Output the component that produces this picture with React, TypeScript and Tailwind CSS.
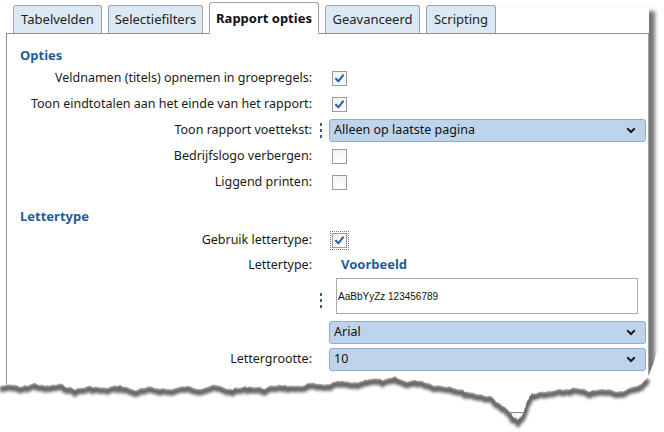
import React from "react";

const font = { fontFamily: '"Segoe UI", "Noto Sans", sans-serif' };

function Check({ checked, focus }: { checked?: boolean; focus?: boolean }) {
  return (
    <div className={focus ? "ml-[3px] outline outline-1 outline-dotted outline-[#777] outline-offset-[1px]" : "ml-[3px]"}>
      <div className="w-[15px] h-[15px] border border-[#9a9b9c] bg-gradient-to-b from-[#f2f2f2] to-[#ffffff] flex items-center justify-center">
        {checked && (
          <svg width="11" height="11" viewBox="0 0 11 11">
            <path d="M2 5.8 L4.4 8.3 L9 2.4" fill="none" stroke="#2a62ab" strokeWidth="2.1" strokeLinecap="round" strokeLinejoin="round" />
          </svg>
        )}
      </div>
    </div>
  );
}

function Dots() {
  return (
    <div className="flex flex-col gap-[3px] items-center">
      <div className="w-[2px] h-[3px] bg-[#3d5f86]" />
      <div className="w-[2px] h-[3px] bg-[#3d5f86]" />
      <div className="w-[2px] h-[3px] bg-[#3d5f86]" />
    </div>
  );
}

function Select({ value }: { value: string }) {
  return (
    <div className="w-[317px] h-[23px] rounded-[3px] border border-[#93abc6] bg-[#bed4ec] flex items-center justify-between pl-[4px] pr-[9px] text-[12.5px] text-[#111]">
      <span>{value}</span>
      <svg width="10" height="7" viewBox="0 0 10 7">
        <path d="M1.2 1.3 L5 5 L8.8 1.3" fill="none" stroke="#1b1b1b" strokeWidth="2" />
      </svg>
    </div>
  );
}

function Row({ label, dots, children, h = "h-[26px]" }: { label?: string; dots?: boolean; children?: React.ReactNode; h?: string }) {
  return (
    <div className={`flex items-center ${h}`}>
      <div className="w-[305px] text-right text-[12.5px] text-[#1a1a1a]">{label}</div>
      <div className="w-[17px] flex justify-center">{dots && <Dots />}</div>
      <div className="flex items-center">{children}</div>
    </div>
  );
}

function Tab({ label, w, active }: { label: string; w: string; active?: boolean }) {
  return active ? (
    <div className={`${w} h-[32px] -mb-px mt-[2px] bg-white border border-b-0 border-[#9aa3ad] rounded-t-[3px] flex items-center justify-center font-bold text-[13px] text-[#111] relative z-10`}>
      {label}
    </div>
  ) : (
    <div className={`${w} h-[28px] mt-[5px] bg-[#dde8f5] border border-b-0 border-[#9aa3ad] rounded-t-[3px] flex items-center justify-center text-[13px] text-[#222]`}>
      {label}
    </div>
  );
}

const base: [number, number][] = [
  [0, 386], [10, 384], [20, 387], [35, 383], [45, 386], [60, 384], [75, 389], [90, 386], [105, 388], [120, 385], [135, 390],
  [150, 387], [170, 389], [185, 386], [200, 388], [215, 385], [230, 389], [250, 386], [265, 388], [280, 384], [295, 387],
  [310, 383], [325, 385], [340, 381], [355, 383], [370, 378], [385, 380], [395, 377], [405, 381], [420, 380], [435, 385],
  [450, 386], [465, 391], [480, 394], [492, 397], [500, 404], [508, 410], [513, 416], [518, 420], [523, 414], [527, 401],
  [532, 393], [545, 392], [558, 390], [575, 388], [590, 391], [605, 389], [620, 391], [635, 387], [645, 381], [650, 372], [654, 362], [657, 352],
];

function jagged(): [number, number][] {
  const out: [number, number][] = [];
  let seed = 7;
  const rnd = () => {
    seed = (seed * 9301 + 49297) % 233280;
    return seed / 233280;
  };
  for (let i = 0; i < base.length - 1; i++) {
    const [x0, y0] = base[i];
    const [x1, y1] = base[i + 1];
    const steps = Math.max(1, Math.round(Math.hypot(x1 - x0, y1 - y0) / 2.5));
    for (let s = 0; s < steps; s++) {
      const t = s / steps;
      const j = i > 0 && i < base.length - 3 ? (rnd() - 0.5) * 2.4 : 0;
      out.push([x0 + (x1 - x0) * t, y0 + (y1 - y0) * t + j]);
    }
  }
  out.push(base[base.length - 1]);
  return out;
}

export default function App() {
  const edge = jagged();
  const line = edge.map(([x, y], i) => `${i ? "L" : "M"}${x.toFixed(1)} ${y.toFixed(1)}`).join(" ");
  const shadowLine = edge
    .filter(([x]) => x < 648)
    .map(([x, y], i) => `${i ? "L" : "M"}${x.toFixed(1)} ${(y + 3.5).toFixed(1)}`)
    .join(" ");
  const fill = `${line} L664 352 L664 432 L0 432 Z`;

  return (
    <div className="w-[664px] h-[432px] bg-white relative overflow-hidden" style={font}>
      <div className="absolute left-0 top-[8px] w-[649px] h-[400px] shadow-[6px_3px_4px_rgba(0,0,0,0.55)] bg-white" />
      <div className="relative w-[649px]">
        <div className="flex gap-[6px] pl-[13px] h-[34px] items-start">
          <Tab label="Tabelvelden" w="w-[89px]" />
          <Tab label="Selectiefilters" w="w-[95px]" />
          <Tab label="Rapport opties" w="w-[110px]" active />
          <Tab label="Geavanceerd" w="w-[95px]" />
          <Tab label="Scripting" w="w-[70px]" />
        </div>
        <div className="ml-[6px] border border-[#8c9096] border-r-[#a0a4a8] bg-white h-[380px] -mt-px">
          <div className="pt-[12px]">
            <div className="h-[19px] pl-[13px] flex items-center text-[13px] font-bold text-[#1f5c99]">Opties</div>
            <Row label="Veldnamen (titels) opnemen in groepregels:"><Check checked /></Row>
            <Row label="Toon eindtotalen aan het einde van het rapport:"><Check checked /></Row>
            <Row label="Toon rapport voettekst:" dots><Select value="Alleen op laatste pagina" /></Row>
            <Row label="Bedrijfslogo verbergen:"><Check /></Row>
            <Row label="Liggend printen:"><Check /></Row>
            <div className="h-[20px] mt-[12px] pl-[13px] flex items-center text-[13px] font-bold text-[#1f5c99]">Lettertype</div>
            <Row label="Gebruik lettertype:"><Check checked focus /></Row>
            <Row label="Lettertype:" h="h-[24px]">
              <span className="ml-[12px] text-[13px] font-bold text-[#1f5c99]">Voorbeeld</span>
            </Row>
            <div className="flex h-[36px] mt-[1px]">
              <div className="w-[305px]" />
              <div className="w-[17px] flex justify-center pt-[15px]"><Dots /></div>
              <div className="ml-[7px] w-[302px] h-[36px] border border-[#a9a9a9] bg-white flex items-center pl-[1px] text-[10px] text-[#111]" style={{ fontFamily: '"Liberation Sans", Arial, sans-serif' }}>
                AaBbYyZz 123456789
              </div>
            </div>
            <div className="mt-[5px]"><Row><Select value="Arial" /></Row></div>
            <div className="mt-[1px]"><Row label="Lettergrootte:"><Select value="10" /></Row></div>
          </div>
        </div>
      </div>
      <svg className="absolute inset-0 pointer-events-none" width="664" height="432" viewBox="0 0 664 432">
        <defs>
          <clipPath id="below">
            <path d={fill} />
          </clipPath>
          <filter id="blur" x="-5%" y="-50%" width="110%" height="200%">
            <feGaussianBlur stdDeviation="1.8" />
          </filter>
        </defs>
        <path d={fill} fill="#ffffff" />
        <g clipPath="url(#below)">
          <path d={shadowLine} fill="none" stroke="#666" strokeWidth="6" filter="url(#blur)" />
        </g>
      </svg>
    </div>
  );
}
